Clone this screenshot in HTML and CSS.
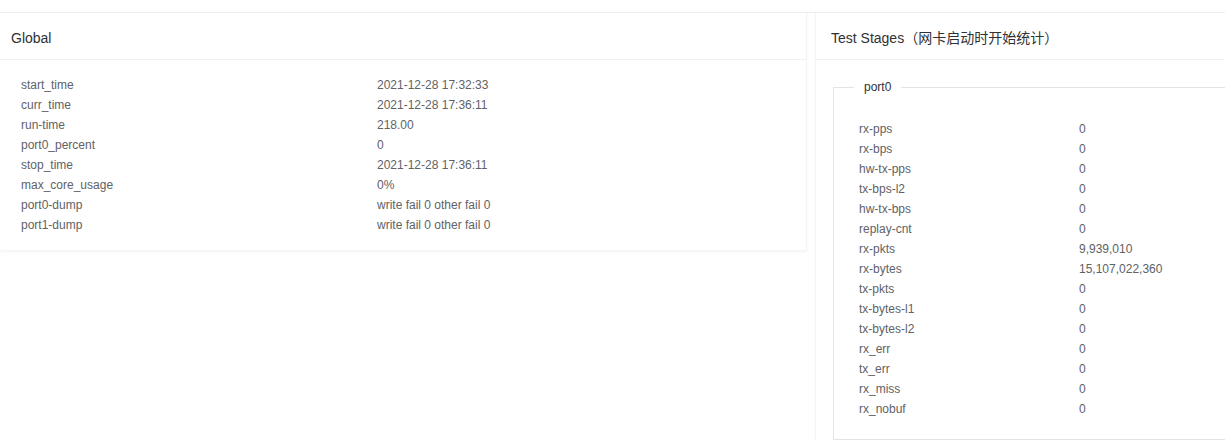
FILE: index.html
```html
<!DOCTYPE html>
<html>
<head>
  <title>Stats</title>
  <link rel="stylesheet" href="styles.css">
</head>
<body>
  <div class="topbar"></div>

  <div class="page">
    <div class="card card-global">
      <div class="card-header">Global</div>
      <div class="card-body">
        <div class="kv kv-global">
          <span>start_time</span><span>2021-12-28 17:32:33</span>
          <span>curr_time</span><span>2021-12-28 17:36:11</span>
          <span>run-time</span><span>218.00</span>
          <span>port0_percent</span><span>0</span>
          <span>stop_time</span><span>2021-12-28 17:36:11</span>
          <span>max_core_usage</span><span>0%</span>
          <span>port0-dump</span><span>write fail 0 other fail 0</span>
          <span>port1-dump</span><span>write fail 0 other fail 0</span>
        </div>
      </div>
    </div>

    <div class="card card-stages">
      <div class="card-header header-stages">Test Stages（网卡启动时开始统计）</div>
      <div class="card-body stages-body">
        <fieldset class="port">
          <legend>port0</legend>
          <div class="kv kv-port">
            <span>rx-pps</span><span>0</span>
            <span>rx-bps</span><span>0</span>
            <span>hw-tx-pps</span><span>0</span>
            <span>tx-bps-l2</span><span>0</span>
            <span>hw-tx-bps</span><span>0</span>
            <span>replay-cnt</span><span>0</span>
            <span>rx-pkts</span><span>9,939,010</span>
            <span>rx-bytes</span><span>15,107,022,360</span>
            <span>tx-pkts</span><span>0</span>
            <span>tx-bytes-l1</span><span>0</span>
            <span>tx-bytes-l2</span><span>0</span>
            <span>rx_err</span><span>0</span>
            <span>tx_err</span><span>0</span>
            <span>rx_miss</span><span>0</span>
            <span>rx_nobuf</span><span>0</span>
          </div>
        </fieldset>
      </div>
    </div>
  </div>
</body>
</html>
```

FILE: styles.css
```css
html, body {
  overflow: hidden;
}

body {
  margin: 0;
  font-family: "Liberation Sans", Arial, "Noto Sans CJK SC", sans-serif;
  font-size: 12px;
  color: #606266;
  background-color: #ffffff;
}

.topbar {
  height: 12px;
  border-bottom: 1px solid #eeeeee;
}

.page {
  display: flex;
  align-items: flex-start;
  gap: 8px;
  width: 1300px;
}

.card {
  flex: none;
  background-color: #ffffff;
  border: 1px solid #f4f4f4;
  border-top: none;
  box-shadow: 0 1px 3px rgba(0, 0, 0, 0.04);
}

.card-global {
  width: 806px;
  border-left: none;
}

.card-stages {
  width: 440px;
  height: 440px;
}

.card-header {
  padding: 15px 11px 11px;
  line-height: 20px;
  font-size: 14px;
  color: #303133;
  border-bottom: 1px solid #f0f0f0;
}

.header-stages {
  padding-left: 15px;
}

.card-body {
  padding: 15px 0 15px 21px;
}

.stages-body {
  padding: 17px 0 0 17px;
}

.kv {
  display: grid;
  line-height: 20px;
}

.kv-global {
  grid-template-columns: 356px 1fr;
}

.kv-port {
  grid-template-columns: 220px 1fr;
  padding: 22px 0 0 25px;
}

.port {
  margin: 0;
  padding: 0 0 20px 0;
  border: 1px solid #e4e4e4;
}

.port legend {
  margin-left: 20px;
  padding: 0 10px;
  line-height: 20px;
  color: #303133;
}
```
